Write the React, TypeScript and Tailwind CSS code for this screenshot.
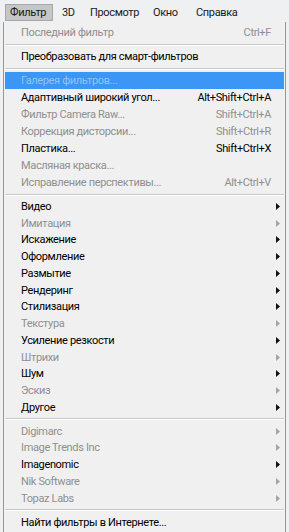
import React from "react";

type Item = { label: string; shortcut?: string; disabled?: boolean; sub?: boolean; active?: boolean };

const font = { fontFamily: 'Roboto, "Noto Sans", sans-serif' };

function Row({ item, h }: { item: Item; h: string }) {
    const color = item.active ? "text-[#93c2f2]" : item.disabled ? "text-[#8f8f8f]" : "text-black";
    return (
        <div className={`${h} flex items-center pl-[16px] pr-[4px] ${item.active ? "bg-[#3b96f5]" : ""} ${color}`}>
            <span className="flex-1 whitespace-nowrap">{item.label}</span>
            {item.shortcut && <span className="pr-[9px] whitespace-nowrap">{item.shortcut}</span>}
            {item.sub && (
                <svg width="4" height="7" viewBox="0 0 4 7">
                    <path d="M0 0 L4 3.5 L0 7 Z" fill={item.disabled ? "#a5a5a5" : "#111"} />
                </svg>
            )}
        </div>
    );
}

function Sep() {
    return (
        <div className="h-[7px] flex flex-col justify-center">
            <div className="h-px bg-[#c9c9c9]" />
            <div className="h-px bg-white" />
        </div>
    );
}

const top: Item[] = [
    { label: "Адаптивный широкий угол...", shortcut: "Alt+Shift+Ctrl+A" },
    { label: "Фильтр Camera Raw...", shortcut: "Shift+Ctrl+A", disabled: true },
    { label: "Коррекция дисторсии...", shortcut: "Shift+Ctrl+R", disabled: true },
    { label: "Пластика...", shortcut: "Shift+Ctrl+X" },
    { label: "Масляная краска...", disabled: true },
    { label: "Исправление перспективы...", shortcut: "Alt+Ctrl+V", disabled: true },
];

const groups: Item[] = [
    { label: "Видео", sub: true },
    { label: "Имитация", sub: true, disabled: true },
    { label: "Искажение", sub: true },
    { label: "Оформление", sub: true },
    { label: "Размытие", sub: true },
    { label: "Рендеринг", sub: true },
    { label: "Стилизация", sub: true },
    { label: "Текстура", sub: true, disabled: true },
    { label: "Усиление резкости", sub: true },
    { label: "Штрихи", sub: true, disabled: true },
    { label: "Шум", sub: true },
    { label: "Эскиз", sub: true, disabled: true },
    { label: "Другое", sub: true },
];

const plugins: Item[] = [
    { label: "Digimarc", sub: true, disabled: true },
    { label: "Image Trends Inc", sub: true, disabled: true },
    { label: "Imagenomic", sub: true },
    { label: "Nik Software", sub: true, disabled: true },
    { label: "Topaz Labs", sub: true, disabled: true },
];

export default function App() {
    return (
        <div className="w-[289px] h-[532px] overflow-hidden bg-[#eef0f2] text-[11px] leading-none tracking-[-0.35px]" style={font}>
            {/* Menu bar */}
            <div className="h-[22px] flex items-start pt-[4px] pl-[5px] text-[#1a1a1a]">
                <div className="w-[48px] h-[17px] pl-[4px] flex items-center bg-[#c4c6c8] border border-[#a6a8aa]">Фильтр</div>
                <div className="w-[37px] h-[17px] pl-[9px] flex items-center">3D</div>
                <div className="w-[63px] h-[17px] flex items-center">Просмотр</div>
                <div className="w-[43px] h-[17px] flex items-center">Окно</div>
                <div className="h-[17px] flex items-center">Справка</div>
            </div>

            {/* Dropdown */}
            <div className="ml-[3px] w-[283px] h-[510px] bg-[#f0f0f0] border-l border-r border-[#979797] pt-[2px] px-[1px]">
                <Row item={{ label: "Последний фильтр", shortcut: "Ctrl+F", disabled: true }} h="h-[17px]" />
                <Sep />
                <Row item={{ label: "Преобразовать для смарт-фильтров" }} h="h-[17px]" />
                <Sep />
                <Row item={{ label: "Галерея фильтров...", active: true }} h="h-[17px]" />
                {top.map((it) => (
                    <Row key={it.label} item={it} h="h-[17px]" />
                ))}
                <Sep />
                {groups.map((it) => (
                    <Row key={it.label} item={it} h="h-[16.75px]" />
                ))}
                <Sep />
                {plugins.map((it) => (
                    <Row key={it.label} item={it} h="h-[16.75px]" />
                ))}
                <Sep />
                <Row item={{ label: "Найти фильтры в Интернете..." }} h="h-[17px]" />
            </div>
        </div>
    );
}
